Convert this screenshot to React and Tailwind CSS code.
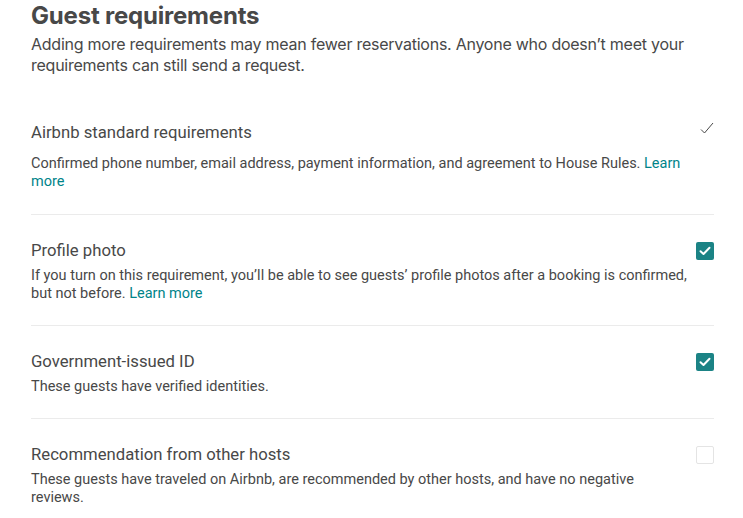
import React from 'react';

const items = [
  {
    title: 'Airbnb standard requirements',
    desc: 'Confirmed phone number, email address, payment information, and agreement to House Rules.',
    link: true,
    state: 'fixed',
  },
  {
    title: 'Profile photo',
    desc: 'If you turn on this requirement, you’ll be able to see guests’ profile photos after a booking is confirmed, but not before.',
    link: true,
    state: 'on',
  },
  {
    title: 'Government-issued ID',
    desc: 'These guests have verified identities.',
    state: 'on',
  },
  {
    title: 'Recommendation from other hosts',
    desc: 'These guests have traveled on Airbnb, are recommended by other hosts, and have no negative reviews.',
    state: 'off',
  },
];

// spacing per row, tuned to the screenshot
const rowPad = ['pb-[23px]', 'pt-[25px] pb-[22px]', 'pt-[25px] pb-[22px]', 'pt-[25px]'];

const Check = ({ state }) => {
  if (state === 'fixed') {
    return (
      <svg width="14" height="12" viewBox="0 0 14 12" className="mt-[-10px]">
        <path d="M1 7.5 L4.5 11 L13 1" fill="none" stroke="#484848" strokeWidth="1" />
      </svg>
    );
  }
  if (state === 'on') {
    return (
      <div className="w-[18px] h-[18px] rounded-[2px] bg-[#1b8385] flex items-center justify-center">
        <svg width="12" height="10" viewBox="0 0 12 10">
          <path d="M1.5 5.2 L4.5 8 L10.5 1.8" fill="none" stroke="#fff" strokeWidth="2" strokeLinecap="round" strokeLinejoin="round" />
        </svg>
      </div>
    );
  }
  return <div className="w-[18px] h-[18px] rounded-[2px] border border-[#e4e4e4] bg-white" />;
};

export default function App() {
  return (
    <div className="bg-white min-h-screen px-[31px] text-[#484848] font-['Roboto',sans-serif]">
      <div className="w-[683px]">
        <h1 className="text-[24px] font-bold leading-[30px] pt-[1px] text-[#484848] font-['Inter',sans-serif] tracking-[-0.2px]">
          Guest requirements
        </h1>
        <p className="mt-[3px] text-[16px] leading-[21px] font-['Inter',sans-serif] tracking-[-0.25px]">
          Adding more requirements may mean fewer reservations. Anyone who doesn’t meet your requirements can still send a request.
        </p>

        <div className="mt-[46px]">
          {items.map((it, i) => (
            <div
              key={it.title}
              className={`${i < items.length - 1 ? 'border-b border-[#ebebeb]' : ''} ${rowPad[i]}`}
            >
              <div className="flex items-center justify-between">
                <div className="text-[16.7px] leading-[22px]">{it.title}</div>
                <Check state={it.state} />
              </div>
              <p className={`text-[14.5px] leading-[18px] w-[657px] ${i === 0 ? 'mt-[11px]' : 'mt-[5px]'}`}>
                {it.desc}
                {it.link && <span className="text-[#008489]"> Learn more</span>}
              </p>
            </div>
          ))}
        </div>
      </div>
    </div>
  );
}
